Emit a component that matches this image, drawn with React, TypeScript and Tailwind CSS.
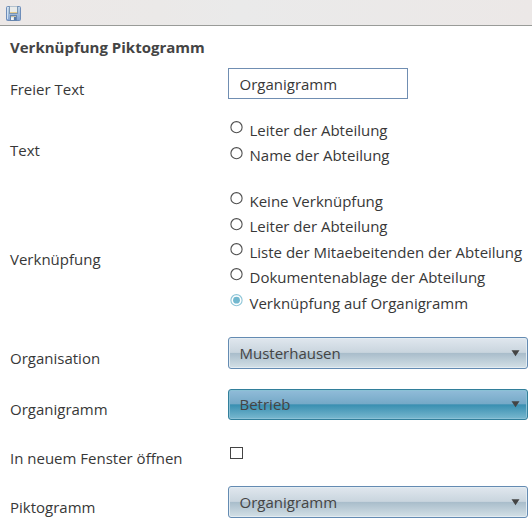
import type { ReactNode } from 'react';

function Row({ label, height, labelTop, top, children }: {
  label: string; height: number; labelTop: number; top: number; children: ReactNode;
}) {
  return (
    <div className="flex w-[532px]" style={{ height }}>
      <div className="w-[228px] shrink-0 pl-[10px]" style={{ paddingTop: labelTop }}>{label}</div>
      <div className="w-[304px] shrink-0" style={{ paddingTop: top }}>{children}</div>
    </div>
  );
}

function Radio({ text, height, offset = 0, checked = false }: {
  text: string; height: number; offset?: number; checked?: boolean;
}) {
  return (
    <div className="flex" style={{ height }}>
      <svg className="ml-[2px] mr-[6.5px] shrink-0" width="13" height="13" viewBox="0 0 13 13" style={{ marginTop: offset }}>
        <circle cx="6.5" cy="6.2" r="5.6" fill="none" stroke={checked ? '#8fc6d8' : '#505050'} strokeWidth="1.1" />
        {checked && <circle cx="6.5" cy="6.2" r="3.4" fill="#72b8cf" />}
      </svg>
      <span>{text}</span>
    </div>
  );
}

function Select({ text, active = false, height }: { text: string; active?: boolean; height: number }) {
  const look = active
    ? 'pt-[4px] border-[#327f9b] bg-[linear-gradient(to_bottom,#91bcd9_0%,#75a9c7_48%,#398fb1_51%,#79b8cf_100%)] shadow-[inset_0_0_0_1px_#8bc1d6]'
    : 'pt-[5px] border-[#648bb2] bg-[linear-gradient(to_bottom,#e0e7ee_0%,#c9d5de_48%,#a9bdcb_51%,#d3e0e6_100%)] shadow-[inset_0_0_0_1px_#e3ecf2]';
  return (
    <div className={`flex w-[300px] justify-between rounded-[3px] border pl-[10.5px] pr-[7px] text-[#444] ${look}`} style={{ height }}>
      <span>{text}</span>
      <svg className="mt-[7px]" width="9" height="7" viewBox="0 0 9 7">
        <path d="M.5 .3H8.5L4.5 6.3Z" fill="#444" />
      </svg>
    </div>
  );
}

function SaveIcon() {
  return (
    <svg width="15" height="15" viewBox="0 0 15 15">
      <defs>
        <linearGradient id="disk" x1="0" y1="0" x2="0" y2="1">
          <stop stopColor="#c3d6e6" />
          <stop offset="1" stopColor="#82a3d2" />
        </linearGradient>
      </defs>
      <rect x=".5" y=".5" width="14" height="14" rx="1" fill="url(#disk)" stroke="#6e8db9" />
      <path d="M1.5 13V1.5H3" fill="none" stroke="#d1e2f2" />
      <rect x="3.5" y="0" width="8" height="7.5" fill="#e9ebea" stroke="#7c97b2" />
      <path d="M4 6.5H11" stroke="#e4ca8c" />
      <rect x="4.5" y="9.5" width="6" height="5" fill="#dce7ee" stroke="#6685ad" />
      <path d="M5 10.5H10" stroke="#c8bea0" />
      <rect x="5" y="12" width="2" height="2" fill="#f4f7fa" />
      <rect x="8" y="11" width="2" height="3" fill="#567aa9" />
    </svg>
  );
}

export default function App() {
  return (
    <main className="h-[527px] w-[532px] overflow-hidden bg-white font-['Open_Sans',sans-serif] text-[15px] leading-[20px] text-[#383838]">
      <header className="h-[26px] border-b border-[#999b98] bg-[linear-gradient(to_right,#ece8e7,#ebe9e8_30%,#eaeaea_45%,#ece8e7)] pl-[6px] pt-[6px]">
        <SaveIcon />
      </header>
      <h1 className="h-[42px] pl-[10px] pt-[11px] font-bold text-[#444]">Verknüpfung Piktogramm</h1>
      <Row label="Freier Text" height={52} labelTop={11} top={0}>
        <input aria-label="Freier Text" defaultValue="Organigramm" className="block h-[31px] w-[180px] border border-[#708eb2] bg-white pb-[4px] pl-[10.5px] pt-[5px] outline-none" />
      </Row>
      <Row label="Text" height={71} labelTop={20} top={0}>
        <Radio text="Leiter der Abteilung" height={25} offset={1} />
        <Radio text="Name der Abteilung" height={25} offset={2} />
      </Row>
      <Row label="Verknüpfung" height={146} labelTop={58} top={0}>
        <Radio text="Keine Verknüpfung" height={25} offset={1} />
        <Radio text="Leiter der Abteilung" height={26} offset={2} />
        <Radio text="Liste der Mitaebeitenden der Abteilung" height={25} offset={1} />
        <Radio text="Dokumentenablage der Abteilung" height={26} offset={1} />
        <Radio text="Verknüpfung auf Organigramm" height={25} offset={1} checked />
      </Row>
      <Row label="Organisation" height={52} labelTop={11} top={0}>
        <Select text="Musterhausen" height={32} />
      </Row>
      <Row label="Organigramm" height={58} labelTop={10} top={0}>
        <Select text="Betrieb" height={31} active />
      </Row>
      <Row label="In neuem Fenster öffnen" height={39} labelTop={1} top={0}>
        <div role="checkbox" aria-checked="false" className="ml-[2px] h-[12px] w-[13px] border border-[#444]" />
      </Row>
      <Row label="Piktogramm" height={40} labelTop={11} top={0}>
        <Select text="Organigramm" height={32} />
      </Row>
    </main>
  );
}
